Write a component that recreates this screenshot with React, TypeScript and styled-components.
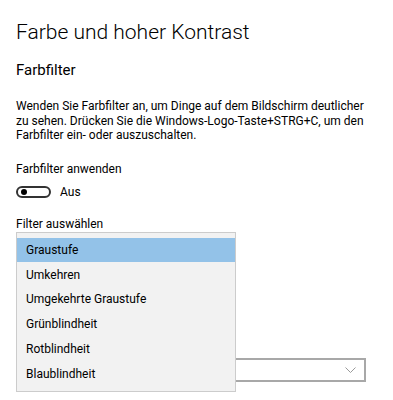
import styled, { createGlobalStyle } from "styled-components";

const GlobalStyle = createGlobalStyle`
  html, body {
    margin: 0;
    padding: 0;
    background: #ffffff;
  }
  body {
    font-family: Roboto, "Liberation Sans", Arial, sans-serif;
    color: #000000;
  }
`;

const filters = [
  "Graustufe",
  "Umkehren",
  "Umgekehrte Graustufe",
  "Grünblindheit",
  "Rotblindheit",
  "Blaublindheit",
];

function App() {
  return (
    <>
      <GlobalStyle />
      <Page>
        <Title>Farbe und hoher Kontrast</Title>
        <Subtitle>Farbfilter</Subtitle>
        <Description>
          Wenden Sie Farbfilter an, um Dinge auf dem Bildschirm deutlicher zu
          sehen. Drücken Sie die Windows-Logo-Taste+STRG+C, um den Farbfilter
          ein- oder auszuschalten.
        </Description>

        {/* toggle */}
        <FieldLabel>Farbfilter anwenden</FieldLabel>
        <ToggleRow>
          <Toggle>
            <Knob />
          </Toggle>
          <ToggleText>Aus</ToggleText>
        </ToggleRow>

        {/* filter select */}
        <FieldLabel $top={17}>Filter auswählen</FieldLabel>
        <FilterArea>
          <ComboBox>
            <Chevron width="11" height="6" viewBox="0 0 11 6">
              <path d="M0.5 0.5 L5.5 5.5 L10.5 0.5" fill="none" stroke="#9a9a9a" strokeWidth="1" />
            </Chevron>
          </ComboBox>
          <Popup>
            {filters.map((name, i) => (
              <Option key={name} $selected={i === 0}>
                {name}
              </Option>
            ))}
          </Popup>
        </FilterArea>
      </Page>
    </>
  );
}

export default App;

const Page = styled.div`
  display: flex;
  flex-direction: column;
  align-items: flex-start;
  padding: 20px 16px 0 16px;
  width: 393px;
  height: 400px;
  box-sizing: border-box;
  overflow: hidden;
`;

const Title = styled.h1`
  margin: 0;
  font-size: 21px;
  line-height: 24px;
  font-weight: 300;
  color: #000;
`;

const Subtitle = styled.h2`
  margin: 16px 0 0 0;
  font-size: 15px;
  line-height: 20px;
  font-weight: 400;
  color: #000;
`;

const Description = styled.p`
  margin: 19px 0 0 0;
  width: 360px;
  font-size: 12px;
  line-height: 14.5px;
  color: #000;
`;

const FieldLabel = styled.div<{ $top?: number }>`
  margin-top: ${(p) => p.$top ?? 18}px;
  font-size: 12px;
  line-height: 16px;
  color: #000;
`;

const ToggleRow = styled.div`
  display: flex;
  align-items: center;
  gap: 9px;
  margin-top: 9px;
  height: 13px;
`;

const Toggle = styled.div`
  width: 35px;
  height: 12px;
  box-sizing: border-box;
  border: 2px solid #333;
  border-radius: 6px;
  display: flex;
  align-items: center;
  padding-left: 3px;
`;

const Knob = styled.div`
  width: 6px;
  height: 6px;
  border-radius: 50%;
  background: #000;
`;

const ToggleText = styled.span`
  font-size: 12px;
  line-height: 13px;
`;

const FilterArea = styled.div`
  position: relative;
  margin-top: 0;
  width: 350px;
  padding-top: 126px;
`;

const ComboBox = styled.div`
  width: 350px;
  height: 24px;
  box-sizing: border-box;
  border: 2px solid #a8a8a8;
  background: #fff;
  display: flex;
  align-items: center;
  justify-content: flex-end;
  padding-right: 8px;
`;

const Chevron = styled.svg`
  display: block;
`;

const Popup = styled.div`
  position: absolute;
  top: 0;
  left: 0;
  width: 220px;
  box-sizing: border-box;
  padding: 5px 0 5px 0;
  background: #f2f2f2;
  border: 1px solid #cccccc;
`;

const Option = styled.div<{ $selected?: boolean }>`
  height: 24.8px;
  display: flex;
  align-items: center;
  padding-left: 9px;
  font-size: 12px;
  color: #000;
  background: ${(p) => (p.$selected ? "#93c2e8" : "transparent")};
`;
